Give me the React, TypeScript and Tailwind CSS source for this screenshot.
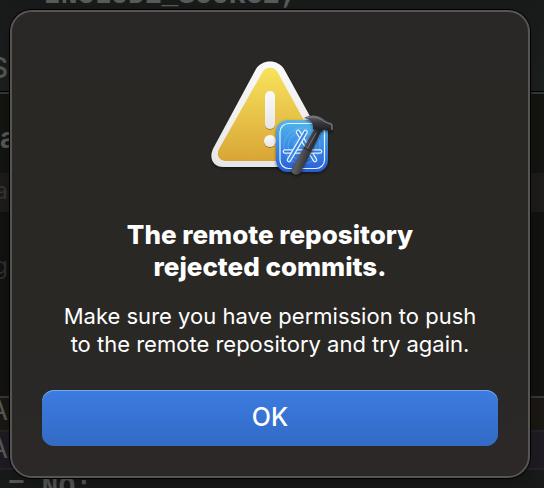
import React from "react";

function WarningIcon() {
  return (
    <svg viewBox="0 0 128 128" className="size-32" role="img" aria-label="Xcode warning">
      <defs>
        <linearGradient id="rim" x1="0" y1="0" x2="0" y2="1">
          <stop offset="0" stopColor="#fafafa" />
          <stop offset="1" stopColor="#e6e6e6" />
        </linearGradient>
        <linearGradient id="yellow" x1="0" y1="0" x2="0" y2="1">
          <stop offset="0" stopColor="#f8e35c" />
          <stop offset="1" stopColor="#d9a536" />
        </linearGradient>
        <linearGradient id="blue" x1="0" y1="0" x2="0" y2="1">
          <stop offset="0" stopColor="#55b6e9" />
          <stop offset="0.5" stopColor="#3a8ce4" />
          <stop offset="1" stopColor="#2a5bd7" />
        </linearGradient>
        <linearGradient id="handle" x1="0" y1="0" x2="1" y2="0.5">
          <stop offset="0" stopColor="#27272c" />
          <stop offset="0.45" stopColor="#5a5b61" />
          <stop offset="0.75" stopColor="#2b2b30" />
          <stop offset="1" stopColor="#18181b" />
        </linearGradient>
        <linearGradient id="head" x1="0" y1="0" x2="0" y2="1">
          <stop offset="0" stopColor="#6c6d72" />
          <stop offset="0.4" stopColor="#3a3a3f" />
          <stop offset="1" stopColor="#1b1b1e" />
        </linearGradient>
        <filter id="shadow" x="-20%" y="-20%" width="140%" height="150%">
          <feDropShadow dx="0" dy="1.5" stdDeviation="1.4" floodColor="#000" floodOpacity="0.5" />
        </filter>
        <filter id="soft" x="-50%" y="-20%" width="200%" height="150%">
          <feDropShadow dx="0" dy="1" stdDeviation="0.6" floodColor="#8a6510" floodOpacity="0.7" />
        </filter>
      </defs>
      <path
        d="M50 13C56 3 72 3 78 13L117 84L110 111H18C7 111 2 102 8 91Z"
        fill="url(#rim)"
        filter="url(#shadow)"
      />
      <path
        d="M56 17C59 10 69 10 72 17L112 90L108 105H20C13 105 10 99 13 93Z"
        fill="url(#yellow)"
      />
      <g filter="url(#soft)" fill="url(#rim)">
        <rect x="59" y="35" width="10" height="38" rx="5" />
        <circle cx="64" cy="85" r="6" />
      </g>
      <rect x="70" y="64" width="52" height="52" rx="12" fill="url(#blue)" filter="url(#shadow)" />
      <rect x="74" y="67.500" width="44.500" height="45" rx="8.500" fill="none" stroke="#e4f3ff" strokeWidth="1.200" />
      <g fill="none" stroke="#8bd0f5" strokeWidth="0.600" opacity="0.6">
        <circle cx="96" cy="90" r="18" />
        <circle cx="96" cy="90" r="14" />
        <circle cx="96" cy="90" r="8" />
      </g>
      <g strokeLinecap="round">
        <path d="M92 76L109 104" stroke="#e4f3ff" strokeWidth="4.600" />
        <path d="M92 76L109 104" stroke="#3a85e2" strokeWidth="2.200" />
        <path d="M79 95.500H114" stroke="#e4f3ff" strokeWidth="4.600" />
        <path d="M79 95.500H114" stroke="#347bdf" strokeWidth="2.200" />
        <path d="M99.500 76L83 104" stroke="#e4f3ff" strokeWidth="4.600" />
        <path d="M99.500 76L83 104" stroke="#3a85e2" strokeWidth="2.200" />
      </g>
      <g filter="url(#shadow)">
        <path
          d="M108.500 73L115 75.500L107 92L94.500 116.500Q92 119.500 88 118Q84 116.500 86 112L98 91Z"
          fill="url(#handle)"
        />
        <path d="M110 77L101 93" fill="none" stroke="#77787e" strokeWidth="1" />
        <path d="M98 92L105 95" fill="none" stroke="#202024" strokeWidth="1" />
        <path
          d="M98 62C105 58 113 59 119 64L123 66Q125 65 127 68L127 73Q126 76 124 75L119 74Q117 73 116 76L107 73C108 67 104 63 98 62Z"
          fill="url(#head)"
        />
        <path d="M101 61.500C108 60 114 62 118 65.500L124 68" fill="none" stroke="#85868c" strokeWidth="1" />
        <path d="M124 67.500L126 69V74" fill="none" stroke="#96979c" strokeWidth="1" />
      </g>
    </svg>
  );
}

function EditorBackdrop() {
  return (
    <div
      aria-hidden="true"
      className="absolute inset-0 flex flex-col overflow-hidden whitespace-pre font-['Inter',sans-serif] text-[28px] leading-8 text-[#5c5c5b]"
    >
      <div className="h-23 shrink-0 overflow-hidden border-b border-black bg-linear-to-b from-[#191b1b] to-[#1d2120]">
        <div className="-mt-5 pl-11 font-['Liberation_Mono',monospace] font-bold">INCLUDE_SOURCE;</div>
        <div className="mt-10 flex w-2 justify-end font-medium">S</div>
      </div>
      <div className="h-[81px] shrink-0 overflow-hidden border-t-2 border-[#3a3a38] bg-[#151512] pt-7">
        <div className="font-bold">a</div>
      </div>
      <div className="h-[39px] shrink-0 bg-[#1e1d1c] text-2xl leading-9 text-[#383736]">
        <div className="flex w-2 justify-end">a</div>
      </div>
      <div className="h-46 shrink-0 bg-[#131312] pt-9 text-2xl leading-9 text-[#31302f]">
        <div className="flex w-2 justify-end">g</div>
      </div>
      <div className="h-[34px] shrink-0 border-t-2 border-[#3a3a38] bg-[#1c1813] leading-6">
        <div className="flex w-2 justify-end">A</div>
      </div>
      <div className="h-[38px] shrink-0 border-t-2 border-[#26232a] bg-[#201c25]">
        <div className="flex w-2 justify-end">A</div>
      </div>
      <div className="flex-1 border-t-2 border-[#252427] bg-[#181b1a] pt-0.5 pl-2 font-['Liberation_Mono',monospace] font-bold">
        = NO;
      </div>
    </div>
  );
}

export default function App() {
  return (
    <main className="relative flex min-h-screen flex-col overflow-hidden bg-[#151512] py-2.5 pr-3.5 pl-2.5">
      <EditorBackdrop />
      <section
        role="alertdialog"
        aria-labelledby="alert-title"
        aria-describedby="alert-message"
        className="relative flex flex-1 flex-col items-center rounded-[22px] border-2 border-[#575552] bg-linear-to-b from-[#292826] via-[#292824] to-[#2b2827] px-[30px] pt-11 pb-[30px] text-center font-['Inter',sans-serif] text-white shadow-[0_0_0_1px_#000,0_8px_24px_rgba(0,0,0,0.3)]"
      >
        <WarningIcon />
        <h1 id="alert-title" className="mt-[35px] text-[26px] leading-8 font-extrabold">
          The remote repository
          <br />
          rejected commits.
        </h1>
        <p id="alert-message" className="mt-[19px] text-[22px] leading-7">
          Make sure you have permission to push
          <br />
          to the remote repository and try again.
        </p>
        <button
          type="button"
          className="mt-auto h-14 w-full rounded-xl bg-linear-to-b from-[#3c7be0] to-[#336bc5] pb-0.5 text-[25px] leading-8 font-medium shadow-[inset_0_1px_0_#7ba8ee]"
        >
          OK
        </button>
      </section>
    </main>
  );
}
